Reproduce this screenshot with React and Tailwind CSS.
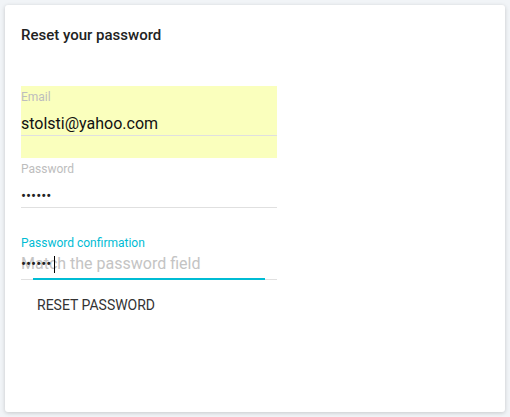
import React from 'react'

const font = { fontFamily: 'Roboto, "Noto Sans", sans-serif' }

const Field = ({ label, children, autofill, focused }) => (
  <div className={`flex h-[72px] w-[256px] flex-col pt-[4px] ${autofill ? 'bg-[#faffbd]' : ''}`}>
    <label
      className={`text-[12px] leading-[14px] ${focused ? 'mt-[2px] text-[#00bcd4]' : 'text-[#bdbdbd]'}`}
    >
      {label}
    </label>
    <div className={`h-[20px] ${focused ? 'mt-[4px] mb-[2px]' : 'mt-[8px]'}`}>{children}</div>
    <div className="relative mt-[3px] h-px bg-[#e0e0e0]">
      {focused && <div className="absolute bottom-0 left-[12px] h-[2px] w-[232px] bg-[#00bcd4]" />}
    </div>
  </div>
)

const Dots = () => (
  <span className="text-[15px] leading-[20px] text-[#222]">••••••</span>
)

export default function App() {
  return (
    <div className="min-h-[417px] bg-[#f1f4f7] p-[5px]" style={font}>
      <div className="h-[407px] rounded-[3px] bg-white px-[16px] pt-[20px] shadow-[0_1px_4px_rgba(0,0,0,0.18)]">
        <h2 className="text-[15px] font-medium leading-[20px] text-[#222]">Reset your password</h2>
        <form className="mt-[41px] flex flex-col">
          <Field label="Email" autofill>
            <span className="text-[16px] leading-[20px] text-[#111]">stolsti@yahoo.com</span>
          </Field>
          <Field label="Password">
            <Dots />
          </Field>
          <Field label="Password confirmation" focused>
            <div className="grid h-[20px] items-center">
              <span className="col-start-1 row-start-1 text-[16px] leading-[20px] text-[#c4c4c4]">
                Match the password field
              </span>
              <div className="col-start-1 row-start-1 flex items-center">
                <Dots />
                <span className="ml-[3px] h-[17px] w-px bg-black" />
              </div>
            </div>
          </Field>
          <button
            type="button"
            className="-mt-[15px] h-[36px] w-fit px-[16px] text-[14px] font-normal uppercase text-[#333]"
          >
            Reset password
          </button>
        </form>
      </div>
    </div>
  )
}
